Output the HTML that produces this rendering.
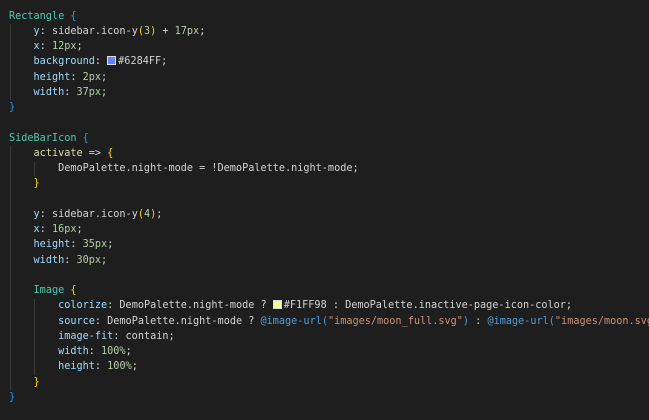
<!DOCTYPE html><html><head><style>
body{margin:0;background:#1e1e1e;width:649px;height:420px;overflow:hidden;position:relative}
pre{margin:0;position:absolute;left:9px;top:8.5px;font-family:"DejaVu Sans Mono","Liberation Mono",monospace;font-size:10.2px;line-height:15.25px;color:#d4d4d4;white-space:pre}
.c{color:#4ec9b0}.p{color:#9cdcfe}.n{color:#b5cea8}.y{color:#ffd700}.b{color:#179fff}.f{color:#dcdcaa}.s{color:#ce9178}.k{color:#569cd6}
.g{position:absolute;width:1px;background:#3a3a3a}
.sw{display:inline-block;width:7px;height:7px;border:1px solid #ddd;margin:0 2px 0 0;vertical-align:-1px}
</style></head><body>
<div class="g" style="left:10px;top:24px;height:76px"></div>
<div class="g" style="left:10px;top:146px;height:244px"></div>
<div class="g" style="left:34px;top:162px;height:15px"></div>
<div class="g" style="left:34px;top:299px;height:76px"></div>
<pre><span class="c">Rectangle</span> <span class="b">{</span>
    <span class="p">y</span>: sidebar.icon-y<span class="y">(</span><span class="n">3</span><span class="y">)</span> + <span class="n">17px</span>;
    <span class="p">x</span>: <span class="n">12px</span>;
    <span class="p">background</span>: <span class="sw" style="background:#6284FF"></span>#6284FF;
    <span class="p">height</span>: <span class="n">2px</span>;
    <span class="p">width</span>: <span class="n">37px</span>;
<span class="b">}</span>

<span class="c">SideBarIcon</span> <span class="b">{</span>
    <span class="f">activate</span> =&gt; <span class="y">{</span>
        DemoPalette.night-mode = !DemoPalette.night-mode;
    <span class="y">}</span>

    <span class="p">y</span>: sidebar.icon-y<span class="y">(</span><span class="n">4</span><span class="y">)</span>;
    <span class="p">x</span>: <span class="n">16px</span>;
    <span class="p">height</span>: <span class="n">35px</span>;
    <span class="p">width</span>: <span class="n">30px</span>;

    <span class="c">Image</span> <span class="y">{</span>
        <span class="p">colorize</span>: DemoPalette.night-mode ? <span class="sw" style="background:#F1FF98"></span>#F1FF98 : DemoPalette.inactive-page-icon-color;
        <span class="p">source</span>: DemoPalette.night-mode ? <span class="k">@image-url(</span><span class="s">"images/moon_full.svg"</span><span class="k">)</span> : <span class="k">@image-url(</span><span class="s">"images/moon.svg"</span><span class="k">)</span>;
        <span class="p">image-fit</span>: contain;
        <span class="p">width</span>: <span class="n">100%</span>;
        <span class="p">height</span>: <span class="n">100%</span>;
    <span class="y">}</span>
<span class="b">}</span></pre>
</body></html>
